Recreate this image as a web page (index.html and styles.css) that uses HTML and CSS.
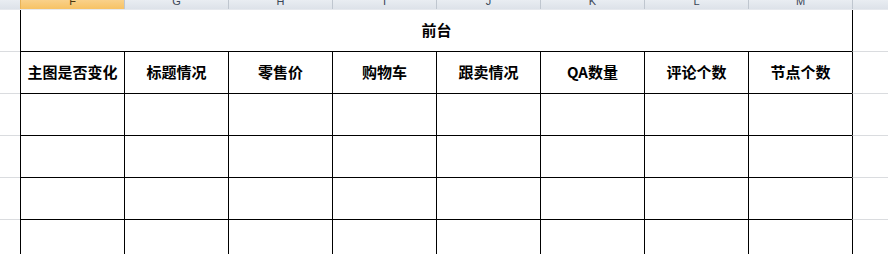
FILE: index.html
```html
<!DOCTYPE html>
<html lang="zh">
<head>
<meta charset="utf-8">
<title>Sheet</title>
<link rel="stylesheet" href="styles.css">
</head>
<body>
<div class="sheet">
  <div class="colhead">
    <div class="ch corner"></div>
    <div class="ch sel"><span>F</span></div>
    <div class="ch"><span>G</span></div>
    <div class="ch"><span>H</span></div>
    <div class="ch"><span>I</span></div>
    <div class="ch"><span>J</span></div>
    <div class="ch"><span>K</span></div>
    <div class="ch"><span>L</span></div>
    <div class="ch"><span>M</span></div>
    <div class="ch rest"></div>
  </div>
  <div class="row">
    <div class="stub"></div>
    <div class="cell merged">前台</div>
    <div class="tail"></div>
  </div>
  <div class="row">
    <div class="stub"></div>
    <div class="cell">主图是否变化</div>
    <div class="cell">标题情况</div>
    <div class="cell">零售价</div>
    <div class="cell">购物车</div>
    <div class="cell">跟卖情况</div>
    <div class="cell">QA数量</div>
    <div class="cell">评论个数</div>
    <div class="cell">节点个数</div>
    <div class="tail"></div>
  </div>
  <div class="row">
    <div class="stub"></div>
    <div class="cell"></div><div class="cell"></div><div class="cell"></div><div class="cell"></div>
    <div class="cell"></div><div class="cell"></div><div class="cell"></div><div class="cell"></div>
    <div class="tail"></div>
  </div>
  <div class="row">
    <div class="stub"></div>
    <div class="cell"></div><div class="cell"></div><div class="cell"></div><div class="cell"></div>
    <div class="cell"></div><div class="cell"></div><div class="cell"></div><div class="cell"></div>
    <div class="tail"></div>
  </div>
  <div class="row">
    <div class="stub"></div>
    <div class="cell"></div><div class="cell"></div><div class="cell"></div><div class="cell"></div>
    <div class="cell"></div><div class="cell"></div><div class="cell"></div><div class="cell"></div>
    <div class="tail"></div>
  </div>
  <div class="row">
    <div class="stub"></div>
    <div class="cell"></div><div class="cell"></div><div class="cell"></div><div class="cell"></div>
    <div class="cell"></div><div class="cell"></div><div class="cell"></div><div class="cell"></div>
    <div class="tail"></div>
  </div>
</div>
</body>
</html>
```

FILE: styles.css
```css
html, body {
  margin: 0;
  padding: 0;
  background: #ffffff;
  overflow: hidden;
}

.sheet {
  width: 888px;
  height: 254px;
  overflow: hidden;
  font-family: "Noto Sans CJK SC", "Liberation Sans", sans-serif;
  color: #000;
}

.colhead {
  display: flex;
  height: 10px;
  box-sizing: border-box;
  border-bottom: 1px solid #e6e9ee;
  background: linear-gradient(#e9edf2, #dde2e9);
  overflow: hidden;
}

.ch {
  width: 104px;
  flex: none;
  box-sizing: border-box;
  border-left: 1px solid #bfc6cf;
  text-align: center;
  font-family: "Liberation Sans", sans-serif;
  font-size: 11px;
  line-height: 11px;
  color: #3b4657;
}

.ch span {
  display: block;
  margin-top: -4px;
}

.ch.corner {
  width: 20px;
  border-left: none;
}

.ch.sel {
  background: linear-gradient(#f9d18a, #f7c264);
  border-left-color: #e7b35a;
  color: #4a3410;
}

.ch.rest {
  flex: 1;
}

.row {
  display: flex;
  height: 42px;
  flex: none;
}

.stub {
  width: 20px;
  flex: none;
  box-sizing: border-box;
  border-bottom: 1px solid #dadcdf;
}

.cell {
  width: 104px;
  flex: none;
  box-sizing: border-box;
  border-left: 1px solid #000;
  border-bottom: 1px solid #000;
  display: flex;
  align-items: center;
  justify-content: center;
  padding-bottom: 2px;
  font-weight: bold;
  font-size: 15px;
  line-height: 1;
}

.cell.merged {
  width: 832px;
}

.tail {
  flex: 1;
  box-sizing: border-box;
  border-left: 1px solid #000;
  border-bottom: 1px solid #dadcdf;
}
```
